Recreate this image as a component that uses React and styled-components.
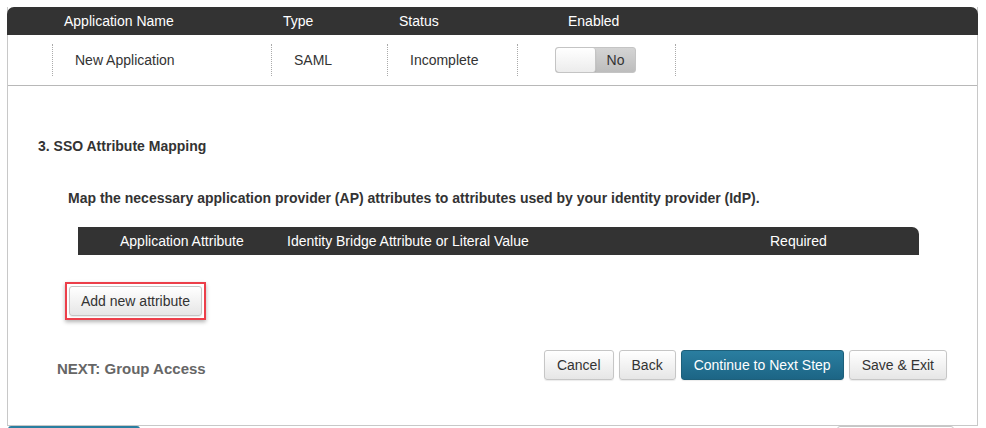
import React from "react";
import styled, { createGlobalStyle } from "styled-components";

const Global = createGlobalStyle`
  html, body { margin: 0; padding: 0; background: #ffffff; }
  body { font-family: "Liberation Sans", Arial, sans-serif; color: #333; overflow: hidden; }
`;

const Page = styled.div`
  width: 986px;
  height: 428px;
  overflow: hidden;
  padding: 7px 0 0 7px;
  box-sizing: border-box;
`;

const Panel = styled.div`
  width: 971px;
  box-sizing: border-box;
  border: 1px solid #c8c8c8;
  border-top: none;
`;

const AppHeader = styled.div`
  display: grid;
  grid-template-columns: 56px 220px 116px 169px 1fr;
  height: 28px;
  align-items: center;
  background: #333333;
  color: #fff;
  font-size: 14px;
  border-radius: 7px 7px 0 0;
  margin: 0 -1px;
`;

const HeadCell = styled.div`
  padding-left: ${(p) => p.$pad || 0}px;
  white-space: nowrap;
`;

const AppRow = styled.div`
  display: grid;
  grid-template-columns: 44px 219px 116px 130px 158px 1fr;
  height: 50px;
  align-items: center;
  border-bottom: 1px solid #b8b8b8;
  font-size: 14px;
  color: #333;
`;

const Cell = styled.div`
  height: 32px;
  display: flex;
  align-items: center;
  padding-left: ${(p) => p.$pad || 0}px;
  border-left: ${(p) => (p.$sep ? "1px dotted #aaa" : "none")};
  white-space: nowrap;
`;

const Toggle = styled.div`
  display: flex;
  width: 81px;
  height: 26px;
  box-sizing: border-box;
  border: 1px solid #c4c4c4;
  border-radius: 3px;
  background: linear-gradient(#d4d4d4, #bdbdbd);
  overflow: hidden;
`;

const Knob = styled.div`
  width: 40px;
  height: 100%;
  box-sizing: border-box;
  background: linear-gradient(#ffffff, #ececec);
  border-right: 1px solid #c4c4c4;
  border-radius: 3px;
  box-shadow: 0 1px 1px rgba(0, 0, 0, 0.12);
`;

const ToggleLabel = styled.div`
  flex: 1;
  display: flex;
  align-items: center;
  justify-content: center;
  font-size: 14px;
  color: #333;
`;

const Content = styled.div`
  padding: 52px 0 0 0;
  height: 339px;
  box-sizing: border-box;
`;

const SectionTitle = styled.div`
  font-size: 14px;
  font-weight: bold;
  line-height: 16px;
  padding-left: 30px;
  color: #333;
`;

const Intro = styled.div`
  font-size: 14px;
  font-weight: bold;
  line-height: 16px;
  margin-top: 36px;
  padding-left: 60px;
  color: #333;
`;

const AttrHeader = styled.div`
  display: grid;
  grid-template-columns: 209px 483px 1fr;
  margin: 21px 0 0 70px;
  width: 841px;
  height: 28px;
  align-items: center;
  background: #333333;
  color: #fff;
  font-size: 14px;
  border-radius: 0 7px 0 0;
`;

const AddWrap = styled.div`
  margin: 27px 0 0 57px;
  display: inline-block;
  padding: 2px;
  border: 2px solid #ec3f4a;
  box-shadow: 0 2px 4px rgba(0, 0, 0, 0.3);
`;

const Button = styled.button`
  font-family: "Liberation Sans", Arial, sans-serif;
  font-size: 14px;
  height: 30px;
  padding: 0 ${(p) => p.$px || 12}px;
  border-radius: 3px;
  border: 1px solid ${(p) => (p.$primary ? "#1d5f7a" : "#c6c6c6")};
  background: ${(p) =>
    p.$primary
      ? "linear-gradient(#2a7ea0, #1c6585)"
      : "linear-gradient(#ffffff, #e6e6e6)"};
  color: ${(p) => (p.$primary ? "#ffffff" : "#333333")};
  box-shadow: 0 1px 1px rgba(0, 0, 0, 0.08);
  cursor: pointer;
`;

const Footer = styled.div`
  display: flex;
  align-items: center;
  justify-content: space-between;
  margin-top: 30px;
  padding: 0 30px 0 49px;
`;

const NextLabel = styled.div`
  font-size: 15px;
  font-weight: bold;
  color: #666;
  margin-top: 7px;
`;

const ButtonGroup = styled.div`
  display: flex;
  gap: 5px;
`;

const BelowRow = styled.div`
  display: flex;
  justify-content: space-between;
  padding: 0 32px 0 1px;
`;

const BlueStub = styled.div`
  width: 132px;
  height: 10px;
  background: #2a7ea0;
  border-radius: 3px 3px 0 0;
`;

const GrayStub = styled.div`
  width: 115px;
  height: 10px;
  border: 1px solid #c6c6c6;
  border-radius: 3px 3px 0 0;
  background: #fff;
`;

export default function App() {
  return (
    <>
      <Global />
      <Page>
        <Panel>
          <AppHeader>
            <div />
            <HeadCell $pad={1}>Application Name</HeadCell>
            <HeadCell>Type</HeadCell>
            <HeadCell>Status</HeadCell>
            <HeadCell>Enabled</HeadCell>
          </AppHeader>
          <AppRow>
            <div />
            <Cell $sep $pad={22}>New Application</Cell>
            <Cell $sep $pad={22}>SAML</Cell>
            <Cell $sep $pad={22}>Incomplete</Cell>
            <Cell $sep $pad={37}>
              <Toggle>
                <Knob />
                <ToggleLabel>No</ToggleLabel>
              </Toggle>
            </Cell>
            <Cell $sep />
          </AppRow>
          <Content>
            <SectionTitle>3. SSO Attribute Mapping</SectionTitle>
            <Intro>
              Map the necessary application provider (AP) attributes to attributes used by your identity provider (IdP).
            </Intro>
            <AttrHeader>
              <HeadCell $pad={42}>Application Attribute</HeadCell>
              <HeadCell>Identity Bridge Attribute or Literal Value</HeadCell>
              <HeadCell>Required</HeadCell>
            </AttrHeader>
            <AddWrap>
              <Button $px={11}>Add new attribute</Button>
            </AddWrap>
            <Footer>
              <NextLabel>NEXT: Group Access</NextLabel>
              <ButtonGroup>
                <Button>Cancel</Button>
                <Button>Back</Button>
                <Button $primary>Continue to Next Step</Button>
                <Button>Save &amp; Exit</Button>
              </ButtonGroup>
            </Footer>
          </Content>
        </Panel>
        <BelowRow>
          <BlueStub />
          <GrayStub />
        </BelowRow>
      </Page>
    </>
  );
}
